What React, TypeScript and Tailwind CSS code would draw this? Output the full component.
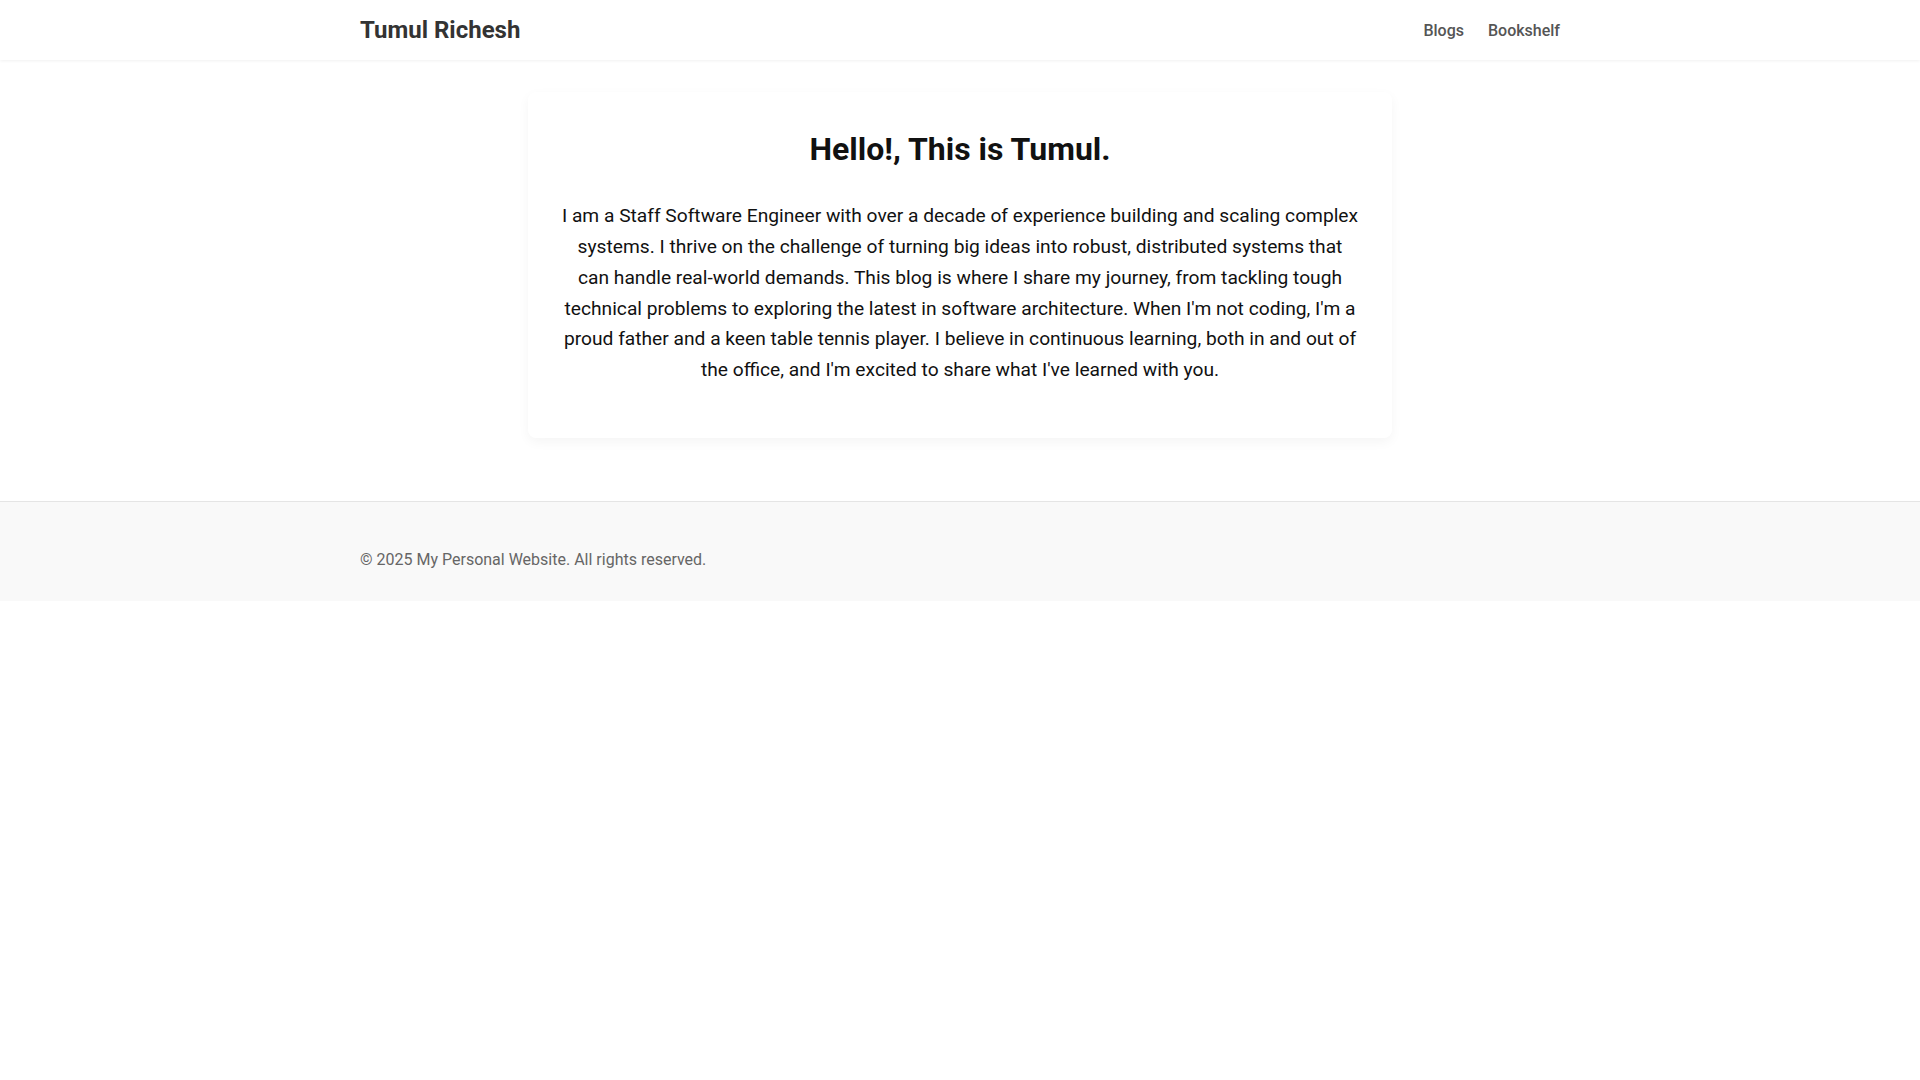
export default function App() {
  return (
    <div className="min-h-screen bg-white font-['Roboto',sans-serif]">
      {/* Header */}
      <header className="h-[60px] bg-white shadow-[0_1px_3px_rgba(0,0,0,0.06)]">
        <div className="mx-auto flex h-full max-w-[1200px] items-center justify-between">
          <a href="#" className="text-[24px] font-bold text-[#333]">
            Tumul Richesh
          </a>
          <nav className="flex items-center gap-6 pt-[2px] text-[16px] font-medium text-[#555]">
            <a href="#">Blogs</a>
            <a href="#">Bookshelf</a>
          </nav>
        </div>
      </header>

      {/* Main */}
      <main className="px-4 pt-8 pb-[63px]">
        <section className="mx-auto w-[864px] rounded-lg bg-white px-8 pt-[38px] pb-[52px] text-center shadow-[0_4px_12px_rgba(0,0,0,0.045)]">
          <h1 className="mb-[33px] text-[32px] font-bold leading-[1.2] text-[#111]">
            Hello!, This is Tumul.
          </h1>
          <p className="text-[19.2px] leading-[1.6] text-[#111]">
            I am a Staff Software Engineer with over a decade of experience building and scaling complex systems. I thrive on the challenge of turning big ideas into robust, distributed systems that can handle real-world demands. This blog is where I share my journey, from tackling tough technical problems to exploring the latest in software architecture. When I'm not coding, I'm a proud father and a keen table tennis player. I believe in continuous learning, both in and out of the office, and I'm excited to share what I've learned with you.
          </p>
        </section>
      </main>

      {/* Footer */}
      <footer className="border-t border-[#e5e5e5] bg-[#f9f9f9] pt-[46px] pb-[29px]">
        <div className="mx-auto max-w-[1200px]">
          <p className="text-[16px] leading-6 text-[#666]">© 2025 My Personal Website. All rights reserved.</p>
        </div>
      </footer>
    </div>
  );
}
